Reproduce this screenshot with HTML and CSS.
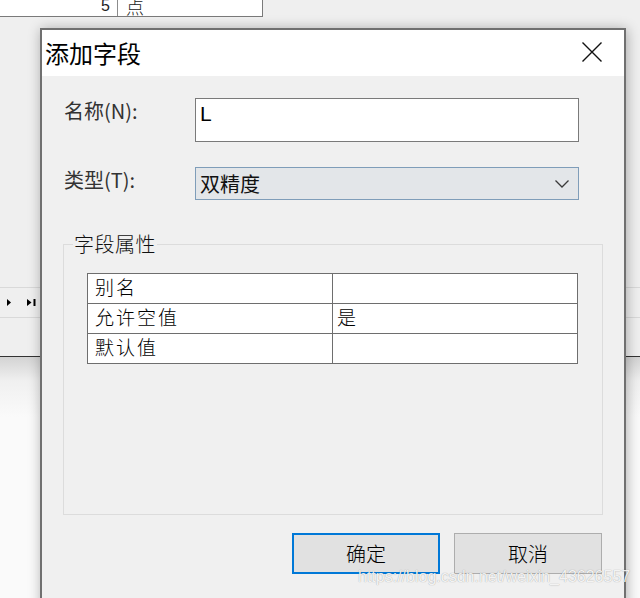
FILE: index.html
```html
<!DOCTYPE html>
<html lang="zh-CN">
<head>
<meta charset="utf-8">
<title>添加字段</title>
<link rel="stylesheet" href="styles.css">
</head>
<body>
<div class="screen">
  <div class="backdrop">
    <div class="bg-row">
      <div class="bg-cell bg-num">5</div>
      <div class="bg-cell bg-txt">点</div>
    </div>
    <div class="bg-upper"></div>
    <div class="bg-toolbar">
      <svg class="tb-next" width="4" height="7" viewBox="0 0 4 7"><polygon points="0,0 4,3.5 0,7" fill="#000"/></svg>
      <svg class="tb-last" width="9" height="7" viewBox="0 0 9 7"><polygon points="0,0 4.5,3.5 0,7" fill="#000"/><rect x="6.5" y="0" width="2" height="7" fill="#000"/></svg>
    </div>
    <div class="bg-mid"></div>
    <div class="bg-lower"></div>
  </div>

  <div class="dialog">
    <div class="titlebar">
      <span class="title">添加字段</span>
      <svg class="close" width="20" height="20" viewBox="0 0 20 20"><path d="M0.5 0.5 L19.5 19.5 M19.5 0.5 L0.5 19.5" stroke="#111" stroke-width="1.4" fill="none"/></svg>
    </div>
    <div class="content">
      <div class="form-row">
        <span class="label">名称(N):</span>
        <div class="textbox">L</div>
      </div>
      <div class="form-row row-type">
        <span class="label">类型(T):</span>
        <div class="combo">
          <span>双精度</span>
          <svg class="chevron" width="14" height="8" viewBox="0 0 14 8"><polyline points="0.5,0.5 7,7 13.5,0.5" stroke="#3a3a3a" stroke-width="1.3" fill="none"/></svg>
        </div>
      </div>
      <div class="group">
        <div class="group-title">字段属性</div>
        <div class="grid">
          <div class="cell">别名</div><div class="cell cell-val"></div>
          <div class="cell">允许空值</div><div class="cell cell-val">是</div>
          <div class="cell">默认值</div><div class="cell cell-val"></div>
        </div>
      </div>
      <div class="buttons">
        <div class="btn btn-default">确定</div>
        <div class="btn">取消</div>
      </div>
    </div>
  </div>

  <div class="watermark">https://blog.csdn.net/weixin_43626557</div>
</div>
</body>
</html>
```

FILE: styles.css
```css
html, body {
  margin: 0;
  height: 598px;
  overflow: hidden;
}
body {
  background: #f0f0f0;
  font-family: "Noto Sans CJK SC", "Noto Sans", sans-serif;
}
.screen {
  position: relative;
  width: 640px;
  height: 598px;
  overflow: hidden;
}

/* background window */
.backdrop {
  display: flex;
  flex-direction: column;
  height: 598px;
  background: #efefef;
}
.bg-row {
  display: flex;
  width: 262px;
  height: 16px;
  flex: none;
  background: #fff;
  border-right: 1px solid #7a7a7a;
  border-bottom: 1px solid #7a7a7a;
  overflow: hidden;
}
.bg-cell {
  display: flex;
  align-items: flex-end;
  height: 16px;
  line-height: 20px;
  color: #222;
  overflow: hidden;
}
.bg-num {
  width: 110px;
  padding-right: 7px;
  justify-content: flex-end;
  border-right: 1px solid #8c8c8c;
  font-family: "Liberation Sans", sans-serif;
  font-size: 16px;
}
.bg-txt {
  padding-left: 8px;
  font-size: 18px;
  font-weight: 300;
}
.bg-upper {
  height: 270px;
  flex: none;
}
.bg-toolbar {
  height: 29px;
  flex: none;
  display: flex;
  align-items: center;
  border-top: 1px solid #d9d9d9;
  border-bottom: 1px solid #d9d9d9;
  padding-left: 7px;
}
.tb-last {
  margin-left: 16px;
}
.bg-mid {
  height: 38px;
  flex: none;
  border-bottom: 1px solid #333;
}
.bg-lower {
  flex: 1;
  background: linear-gradient(#d3d3d3, #f0f0f0 24px, #fafafa 60px);
}

/* dialog */
.dialog {
  position: absolute;
  left: 40px;
  top: 28px;
  width: 582px;
  height: 580px;
  border: 2px solid #707070;
  background: #f0f0f0;
  box-shadow: 1px 1px 12px rgba(0, 0, 0, 0.3);
}
.titlebar {
  height: 46px;
  background: #fff;
  display: flex;
  align-items: center;
  justify-content: space-between;
  padding: 0 22px 0 3px;
}
.title {
  font-size: 24px;
  line-height: 30px;
  color: #000;
}
.close {
  margin-bottom: 2px;
}
.content {
  padding-top: 22px;
}
.form-row {
  display: flex;
  align-items: flex-start;
}
.label {
  width: 131px;
  padding-left: 22px;
  font-size: 20px;
  line-height: 26px;
  color: #333;
}
.textbox {
  width: 384px;
  height: 44px;
  box-sizing: border-box;
  border: 1px solid #7a7a7a;
  background: #fff;
  padding: 3px 4px;
  font-family: "Liberation Sans", sans-serif;
  font-size: 21px;
  line-height: 24px;
  color: #000;
}
.row-type {
  margin-top: 25px;
}
.row-type .label {
  margin-top: 0;
}
.combo {
  width: 384px;
  height: 33px;
  box-sizing: border-box;
  border: 1px solid #7f9db9;
  background: #e3e6e9;
  display: flex;
  align-items: center;
  justify-content: space-between;
  padding: 0 9px 0 4px;
  font-size: 20px;
  color: #111;
}
.group {
  margin: 44px 0 0 21px;
  width: 540px;
  height: 271px;
  box-sizing: border-box;
  border: 1px solid #dcdcdc;
}
.group-title {
  margin: -14px 0 0 9px;
  width: max-content;
  padding: 0 1px;
  background: #f0f0f0;
  font-size: 20px;
  font-weight: 300;
  line-height: 26px;
  letter-spacing: 0.5px;
  color: #111;
}
.grid {
  margin: 16px 0 0 23px;
  width: 490px;
  display: grid;
  grid-template-columns: 245px 245px;
  grid-auto-rows: 30px;
  border-top: 1px solid #6e6e6e;
  border-left: 1px solid #6e6e6e;
  background: #fff;
}
.cell {
  box-sizing: border-box;
  border-right: 1px solid #6e6e6e;
  border-bottom: 1px solid #6e6e6e;
  padding: 0 0 4px 7px;
  font-size: 19px;
  font-weight: 300;
  letter-spacing: 2px;
  line-height: 25px;
  color: #000;
}
.cell-val {
  padding-left: 4px;
}
.buttons {
  display: flex;
  justify-content: flex-end;
  gap: 14px;
  margin: 18px 22px 0 0;
}
.btn {
  width: 148px;
  height: 41px;
  box-sizing: border-box;
  border: 1px solid #adadad;
  background: #e1e1e1;
  display: flex;
  align-items: center;
  justify-content: center;
  font-size: 20px;
  font-weight: 300;
  color: #000;
}
.btn-default {
  border: 2px solid #0078d7;
}

.watermark {
  position: absolute;
  left: 358px;
  top: 568px;
  font-family: "Liberation Sans", sans-serif;
  font-size: 16px;
  color: rgba(255, 255, 255, 0.9);
  text-shadow: 0 0 1px rgba(0, 0, 0, 0.4);
  white-space: nowrap;
}
```
